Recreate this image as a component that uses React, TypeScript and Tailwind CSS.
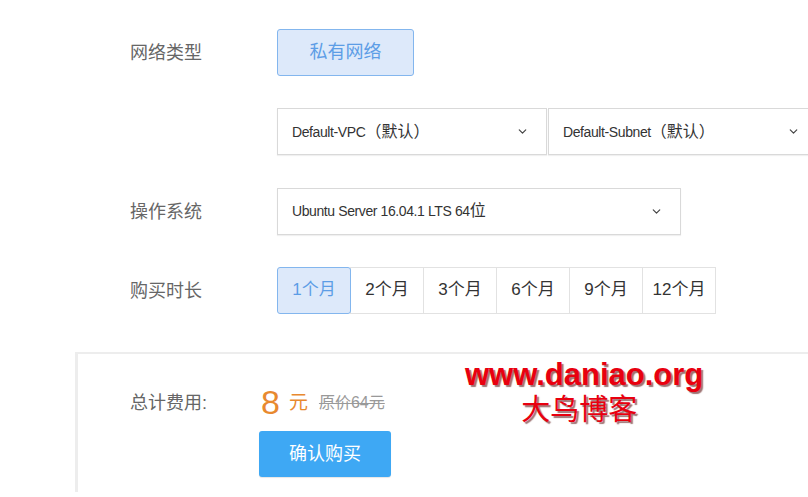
import { ChevronDown } from 'lucide-react'

const durations = ['1个月', '2个月', '3个月', '6个月', '9个月', '12个月']

const Select = ({
  label,
  suffix,
  width,
}: {
  label: string
  suffix?: string
  width: string
}) => (
  <div
    className={`flex h-[47px] shrink-0 items-center justify-between border border-[#d9d9d9] bg-white pl-[14px] pr-[17px] text-[#333] shadow-[0_1px_1px_rgba(0,0,0,0.06)] ${width}`}
  >
    <span className="text-[14px] tracking-[-0.4px]">
      {label}
      {suffix && <span className="text-[16px] tracking-normal">{suffix}</span>}
    </span>
    <ChevronDown className="h-[13px] w-[13px] text-[#444]" strokeWidth={2.2} />
  </div>
)

export default function App() {
  return (
    <div className="relative h-[497px] w-[808px] overflow-hidden bg-white font-['Liberation_Sans','Noto_Sans_CJK_SC',sans-serif]">
      {/* Form rows */}
      <div className="flex flex-col gap-[33px] pl-[130px] pt-[29px]">
        <div className="flex h-[46px] items-center">
          <span className="w-[147px] shrink-0 pt-[2px] text-[18px] text-[#666]">网络类型</span>
          <button className="h-[47px] w-[137px] shrink-0 rounded-[3px] border border-[#83b6ee] bg-[#dde9fa] text-[18px] text-[#5c9de6]">
            私有网络
          </button>
        </div>

        <div className="flex h-[47px] items-center">
          <span className="w-[147px] shrink-0" />
          <Select label="Default-VPC" suffix="（默认）" width="w-[270px]" />
          <div className="ml-px shrink-0">
            <Select label="Default-Subnet" suffix="（默认）" width="w-[270px]" />
          </div>
        </div>

        <div className="flex h-[46px] items-center">
          <span className="w-[147px] shrink-0 pt-[2px] text-[18px] text-[#666]">操作系统</span>
          <Select label="Ubuntu Server 16.04.1 LTS 64" suffix="位" width="w-[404px]" />
        </div>

        <div className="flex h-[46px] items-center">
          <span className="w-[147px] shrink-0 pt-[2px] text-[18px] text-[#666]">购买时长</span>
          <div className="flex">
            {durations.map((d, i) => (
              <button
                key={d}
                className={`h-[47px] w-[74px] border text-[17px] ${i > 0 ? '-ml-px' : ''} ${
                  i === 0
                    ? 'relative z-10 rounded-[3px] border-[#83b6ee] bg-[#dde9fa] text-[#5c9de6]'
                    : 'border-[#e2e2e2] bg-white text-[#333]'
                }`}
              >
                {d}
              </button>
            ))}
          </div>
        </div>
      </div>

      {/* Total panel */}
      <div className="relative ml-[75px] mt-[39px] h-[140px] border-l-[3px] border-t-[2px] border-[#ededed] pl-[52px] pt-[30px]">
        <div className="flex h-[36px] items-center">
          <span className="w-[129px] shrink-0 pt-[2px] text-[18px] text-[#666]">总计费用:</span>
          <span className="ml-[2px] text-[34px] leading-none text-[#e8892f]">8</span>
          <span className="ml-[9px] pt-[2px] text-[19px] text-[#e8892f]">元</span>
          <span className="ml-[11px] pt-[2px] text-[16px] text-[#999] line-through">原价64元</span>
        </div>
        <button className="ml-[129px] mt-[11px] h-[46px] w-[132px] rounded-[3px] bg-[#3ea8f4] text-[18px] text-white shadow-[0_1px_1px_rgba(0,0,0,0.1)]">
          确认购买
        </button>

        {/* Watermark */}
        <div className="absolute left-[387px] top-[3px] flex flex-col items-center">
          <span className="text-[31px] font-bold leading-[36px] text-[#e8000f] [text-shadow:2px_2px_1px_rgba(80,0,0,0.55)]">
            www.daniao.org
          </span>
          <span className="ml-[-10px] font-['Liberation_Serif','Noto_Sans_CJK_SC',serif] text-[29px] leading-[34px] text-[#e8000f] [text-shadow:2px_2px_1px_rgba(80,0,0,0.55)]">
            大鸟博客
          </span>
        </div>
      </div>
    </div>
  )
}
